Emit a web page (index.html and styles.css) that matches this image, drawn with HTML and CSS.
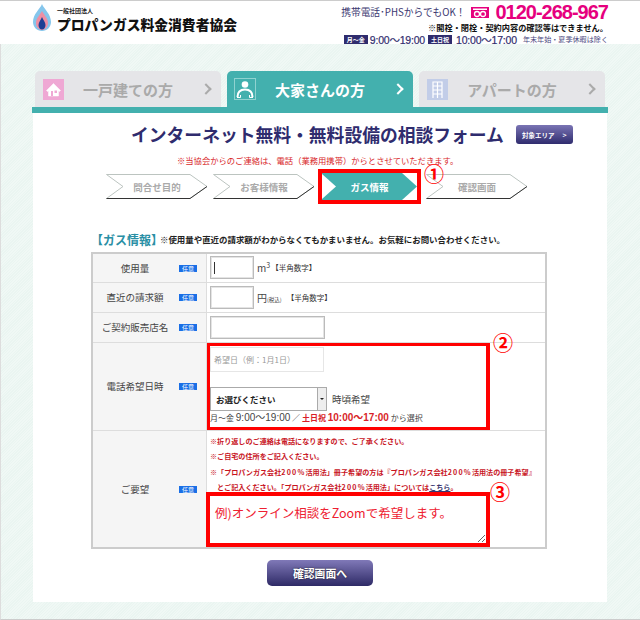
FILE: index.html
```html
<!DOCTYPE html>
<html lang="ja">
<head>
  <meta charset="UTF-8">
  <title>ガス情報 相談フォーム</title>
  <link rel="stylesheet" href="styles.css">
</head>
<body>
  <div class="header">
    <div class="logo">
      <svg class="flame" width="18" height="27" viewBox="0 0 18 27">
        <path d="M9 0C7 5 0 10 0 18c0 5 4 9 9 9s9-4 9-9C18 10 11 5 9 0z" fill="#85c6ec"/>
        <path d="M9 7C7 11 3 14 3 19c0 4 3 7 6 7s6-3 6-7C15 14 11 11 9 7z" fill="#ee8fa4"/>
        <path d="M9 13c-1 3-3.500 5-3.500 8 0 2.500 1.500 4.500 3.500 4.500s3.500-2 3.500-4.500c0-3-2.500-5-3.500-8z" fill="#1c3f94"/>
      </svg>
      <div class="logo-text">
        <div class="logo-small">一般社団法人</div>
        <div class="logo-name">プロパンガス料金消費者協会</div>
      </div>
    </div>
    <div class="contact">
      <div class="contact-top">
        <span class="contact-ok">携帯電話･PHSからでもOK！</span>
        <svg class="freedial" width="18" height="11" viewBox="0 0 18 11">
          <rect width="18" height="11" fill="#e6007e"/>
          <rect x="2" y="1.500" width="14" height="1.500" fill="#fff"/>
          <circle cx="6" cy="7" r="2.500" fill="none" stroke="#fff" stroke-width="1.300"/>
          <circle cx="12" cy="7" r="2.500" fill="none" stroke="#fff" stroke-width="1.300"/>
        </svg>
        <span class="phone">0120-268-967</span>
      </div>
      <div class="contact-note">※開栓・閉栓・契約内容の確認等はできません。</div>
      <div class="contact-hours">
        <span class="hours-badge">月〜金</span>
        <span class="hours">9:00〜19:00</span>
        <span class="hours-badge badge-sat">土日祝</span>
        <span class="hours">10:00〜17:00</span>
        <span class="hours-off">年末年始・夏季休暇は除く</span>
      </div>
    </div>
  </div>

  <div class="page">
    <div class="tabs">
      <div class="tab">
        <svg class="tab-icon" width="21" height="21" viewBox="0 0 21 21">
          <rect width="21" height="21" fill="#efa8d4"/>
          <path d="M10.500 4.500L3.500 11.500l1 1 1-.8V17h10v-5.300l1 .8 1-1z" fill="#fff" stroke="#fff" stroke-linejoin="round" stroke-width="0.500"/>
          <rect x="8" y="12" width="2" height="5" fill="#efa8d4"/>
          <rect x="11.500" y="11.500" width="2.500" height="2.500" fill="#efa8d4"/>
        </svg>
        <span class="tab-label">一戸建ての方</span>
        <span class="tab-arrow"></span>
      </div>
      <div class="tab tab-active">
        <svg class="tab-icon" width="22" height="22" viewBox="0 0 22 22">
          <rect x="0.500" y="0.500" width="21" height="21" fill="none" stroke="#8fd2d0"/>
          <circle cx="11" cy="6.500" r="3.300" fill="#fff"/>
          <path d="M3.500 19c0-5 3-7.500 7.500-7.500s7.500 2.500 7.500 7.500" fill="none" stroke="#fff" stroke-width="2"/>
          <path d="M6.500 17v2.500M15.500 17v2.500M3 19.500h3.500M15.500 19.500H19" fill="none" stroke="#fff" stroke-width="1"/>
        </svg>
        <span class="tab-label">大家さんの方</span>
        <span class="tab-arrow"></span>
      </div>
      <div class="tab">
        <svg class="tab-icon" width="21" height="21" viewBox="0 0 21 21">
          <rect width="21" height="21" fill="#c2cde8"/>
          <path d="M6 19V3h9v16M10.500 3v16M6 7h9M6 11h9M6 15h9" fill="none" stroke="#fff" stroke-width="1.200"/>
        </svg>
        <span class="tab-label">アパートの方</span>
        <span class="tab-arrow"></span>
      </div>
    </div>
    <div class="tab-line"></div>

    <div class="main">
      <div class="title-row">
        <h1>インターネット無料・無料設備の相談フォーム</h1>
        <a class="area-button">対象エリア<span class="area-arrow">&gt;</span></a>
      </div>
      <p class="contact-notice">※当協会からのご連絡は、電話（業務用携帯）からとさせていただきます。</p>

      <div class="steps">
        <div class="step">
          <svg width="102" height="25" viewBox="0 0 102 25">
            <polygon points="0.500,0.500 84,0.500 101,12.500 84,24.500 0.500,24.500 17,12.500" fill="#fff" stroke="#bcc4c0"/>
            <polyline points="101,12.500 84,24.500 0.500,24.500" fill="none" stroke="#333" stroke-width="1"/>
          </svg>
          <span>問合せ目的</span>
        </div>
        <div class="step">
          <svg width="102" height="25" viewBox="0 0 102 25">
            <polygon points="0.500,0.500 84,0.500 101,12.500 84,24.500 0.500,24.500 17,12.500" fill="#fff" stroke="#bcc4c0"/>
            <polyline points="101,12.500 84,24.500 0.500,24.500" fill="none" stroke="#333" stroke-width="1"/>
          </svg>
          <span>お客様情報</span>
        </div>
        <div class="step-mark">
          <div class="step step-active">
            <svg width="95" height="27" viewBox="0 0 95 27">
              <polygon points="0,0 80,0 95,13.500 80,27 0,27" fill="#43b0ae"/>
              <polygon points="0,1 14,13.500 0,26" fill="#fff"/>
            </svg>
            <span>ガス情報</span>
          </div>
        </div>
        <div class="step step-last">
          <svg width="102" height="25" viewBox="0 0 102 25">
            <polygon points="0.500,0.500 84,0.500 101,12.500 84,24.500 0.500,24.500 17,12.500" fill="#fff" stroke="#bcc4c0"/>
            <polyline points="101,12.500 84,24.500 0.500,24.500" fill="none" stroke="#333" stroke-width="1"/>
          </svg>
          <span>確認画面</span>
          <b class="num num-1">①</b>
        </div>
      </div>

      <div class="section-head">
        <span class="section-title">【ガス情報】</span>
        <span class="section-note">※使用量や直近の請求額がわからなくてもかまいません。お気軽にお問い合わせください。</span>
      </div>

      <table class="form-table">
        <tr class="row-first">
          <th><div class="th-inner"><span class="th-label">使用量</span><span class="opt">任意</span></div></th>
          <td>
            <div class="field">
              <div class="input input-small input-focus"></div>
              <span class="unit">m<sup>3</sup></span>
              <span class="hint hint-near">【半角数字】</span>
            </div>
          </td>
        </tr>
        <tr class="row-short">
          <th><div class="th-inner"><span class="th-label">直近の請求額</span><span class="opt">任意</span></div></th>
          <td>
            <div class="field">
              <div class="input input-small"></div>
              <span class="unit">円<small>(税込)</small></span>
              <span class="hint">【半角数字】</span>
            </div>
          </td>
        </tr>
        <tr class="row-short">
          <th><div class="th-inner"><span class="th-label">ご契約販売店名</span><span class="opt">任意</span></div></th>
          <td>
            <div class="field"><div class="input input-wide"></div></div>
          </td>
        </tr>
        <tr class="row-date">
          <th><div class="th-inner"><span class="th-label">電話希望日時</span><span class="opt">任意</span></div></th>
          <td class="cell-mark">
            <div class="date-mark">
              <div class="date-input">希望日（例：1月1日）</div>
              <div class="time-row">
                <div class="fake-select">
                  <span class="select-text">お選びください</span>
                  <span class="select-btn"></span>
                </div>
                <span class="time-label">時頃希望</span>
              </div>
              <div class="time-note">月〜金 <span class="time-num">9:00〜19:00</span> ／ <b>土日祝 <span class="time-num">10:00〜17:00</span></b> から選択</div>
              <b class="num num-2">②</b>
            </div>
          </td>
        </tr>
        <tr class="row-request">
          <th><div class="th-inner"><span class="th-label">ご要望</span><span class="opt">任意</span></div></th>
          <td class="cell-mark">
            <div class="request">
              <p>※折り返しのご連絡は電話になりますので、ご了承ください。</p>
              <p>※ご自宅の住所をご記入ください。</p>
              <p>※「プロパンガス会社<span class="pct">200%</span>活用法」冊子希望の方は『プロパンガス会社<span class="pct">200%</span>活用法の冊子希望』</p>
              <p class="indent">とご記入ください。「プロパンガス会社<span class="pct">200%</span>活用法」については<a>こちら</a>。</p>
              <div class="request-wrap">
                <textarea class="request-box">例)オンライン相談をZoomで希望します。</textarea>
                <b class="num num-3">③</b>
              </div>
            </div>
          </td>
        </tr>
      </table>

      <div class="submit-row"><a class="submit">確認画面へ</a></div>
    </div>
  </div>
</body>
</html>
```

FILE: styles.css
```css
html, body {
  margin: 0;
  height: 620px;
  overflow: hidden;
}
body {
  font-family: "Noto Sans CJK JP", "Liberation Sans", sans-serif;
  background-color: #fff;
  border-top: 1px solid #ccc;
  box-sizing: border-box;
  color: #444;
}
.header {
  display: flex;
  justify-content: space-between;
  height: 43px;
  padding: 0 32px 0 33px;
  background-color: #fff;
}
.logo {
  display: flex;
  gap: 6px;
  padding-top: 3px;
}
.logo-small {
  font-size: 6px;
  font-weight: 700;
  line-height: 8px;
  margin-top: 3px;
  color: #222;
}
.logo-name {
  font-size: 13.8px;
  font-weight: 900;
  line-height: 18px;
  color: #111;
}
.contact {
  display: flex;
  flex-direction: column;
  align-items: flex-end;
  width: 267px;
}
.contact-top {
  display: flex;
  align-items: center;
  height: 18px;
  margin-top: 2px;
  white-space: nowrap;
}
.contact-ok {
  font-size: 9.700px;
  line-height: 18px;
  color: #3b3870;
}
.freedial {
  margin: 0 6px 0 6px;
}
.phone {
  font-family: "Liberation Sans", sans-serif;
  font-size: 20px;
  font-weight: 700;
  letter-spacing: -1px;
  color: #e6007e;
}
.contact-note {
  font-size: 8.2px;
  font-weight: 700;
  line-height: 10px;
  color: #111;
  margin-top: 1px;
}
.contact-hours {
  display: flex;
  align-items: center;
  height: 12px;
  margin-top: 1px;
  white-space: nowrap;
}
.hours-badge {
  background-color: #2f2c6e;
  color: #fff;
  font-size: 6px;
  font-weight: 700;
  line-height: 9px;
  padding: 0 3px;
  margin-right: 2px;
}
.badge-sat {
  margin: 0 4px 0 3px;
}
.hours {
  font-family: "Liberation Sans", "Noto Sans CJK JP", sans-serif;
  font-size: 10.500px;
  letter-spacing: -0.2px;
  color: #2f2c6e;
  -webkit-text-stroke: 0.2px #2f2c6e;
}
.hours-off {
  font-size: 7.100px;
  color: #4a4880;
  margin-left: 6px;
}
.page {
  height: 576px;
  border-bottom: 1px solid #ccc;
  border-left: 1px solid #ddd;
  background-color: #eef7f4;
  background-image: repeating-linear-gradient(135deg, #f0f8f5 0, #f0f8f5 1px, #eaf5f1 1px, #eaf5f1 2px);
  padding-top: 27px;
  box-sizing: border-box;
}
.tabs {
  display: flex;
  gap: 6px;
  padding-left: 34px;
}
.tab {
  display: flex;
  align-items: center;
  width: 186px;
  height: 36px;
  padding: 0 8px;
  box-sizing: border-box;
  background-color: #e5e5e8;
  border-radius: 5px 5px 0 0;
  color: #aaa;
}
.tab-active {
  background-color: #43b0ae;
  color: #fff;
}
.tab-active .tab-icon {
  margin-left: -1px;
}
.tab-icon {
  flex-shrink: 0;
}
.tab-label {
  flex: 1;
  text-align: center;
  font-size: 15px;
  font-weight: 700;
  padding-right: 10px;
}
.tab-arrow {
  width: 6px;
  height: 6px;
  margin-right: 3px;
  border-top: 2px solid currentColor;
  border-right: 2px solid currentColor;
  transform: rotate(45deg);
}
.tab-line {
  height: 6px;
  width: 576px;
  margin-left: 31px;
  background-color: #43b0ae;
}
.main {
  width: 574px;
  height: 489px;
  margin-left: 32px;
  background-color: #fff;
  box-sizing: border-box;
  padding-top: 12px;
}
.title-row {
  display: flex;
  align-items: center;
  gap: 12px;
  height: 19px;
  padding-left: 98px;
}
.title-row h1 {
  margin: 0;
  font-size: 17.800px;
  font-weight: 700;
  line-height: 19px;
  color: #2f2c6e;
  white-space: nowrap;
}
.area-button {
  display: flex;
  align-items: center;
  justify-content: center;
  gap: 8px;
  width: 57px;
  height: 19px;
  border-radius: 3px;
  background: linear-gradient(#7a74b4, #2f2c6e);
  color: #fff;
  font-size: 6.500px;
  font-weight: 700;
}
.area-arrow {
  font-size: 7px;
}
.contact-notice {
  margin: 10px 0 0 144px;
  font-size: 8.300px;
  line-height: 12px;
  color: #d81e28;
  white-space: nowrap;
}
.steps {
  display: flex;
  align-items: center;
  gap: 5px;
  height: 35px;
  margin-top: 3px;
  padding-left: 73px;
}
.step {
  position: relative;
  width: 102px;
  height: 25px;
  display: flex;
  align-items: center;
  justify-content: center;
  flex-shrink: 0;
}
.step svg {
  position: absolute;
  top: 0;
  left: 0;
}
.step span {
  position: relative;
  font-size: 9.500px;
  font-weight: 700;
  color: #aaa;
}
.step-mark {
  width: 103px;
  height: 35px;
  margin-left: -2px;
  border: 4px solid #f00;
  box-sizing: border-box;
  flex-shrink: 0;
}
.step-active {
  width: 95px;
  height: 27px;
}
.step-active span {
  color: #fff;
}
.num {
  position: absolute;
  font-size: 20px;
  line-height: 20px;
  font-weight: 700;
  color: #f00;
}
.num-1 {
  top: -10px;
  left: -2px;
}
.num-2 {
  top: -13px;
  left: 283px;
}
.num-3 {
  top: -10px;
  left: 284px;
}
.section-head {
  display: flex;
  align-items: center;
  height: 14px;
  margin: 28px 0 0 58px;
  white-space: nowrap;
}
.section-title {
  width: 69px;
  font-size: 12px;
  font-weight: 700;
  color: #2a8fa5;
}
.section-note {
  font-size: 8.450px;
  font-weight: 700;
  color: #222;
}
.form-table {
  width: 456px;
  margin: 6px 0 0 58px;
  border-collapse: collapse;
  border: 2px solid #ccc;
  table-layout: fixed;
}
.form-table th,
.form-table td {
  border: 1px solid #ddd;
  padding: 0;
}
.form-table th {
  width: 113px;
  background-color: #f5f5f5;
  font-weight: 400;
}
.th-inner {
  position: relative;
  display: flex;
  align-items: center;
  justify-content: center;
  padding-right: 29px;
}
.th-label {
  font-size: 9.500px;
  color: #444;
  white-space: nowrap;
}
.opt {
  position: absolute;
  top: 50%;
  right: 9px;
  width: 18px;
  height: 7px;
  margin-top: -3px;
  background-color: #1a6fe6;
  color: #fff;
  font-size: 6px;
  line-height: 7px;
  text-align: center;
}
.row-first {
  height: 29px;
}
.row-short {
  height: 30px;
}
.row-date {
  height: 87px;
}
.row-request {
  height: 117px;
}
.field {
  display: flex;
  align-items: center;
  padding-left: 3px;
  white-space: nowrap;
}
.input {
  height: 23px;
  box-sizing: border-box;
  border: 1px solid #bbb;
  box-shadow: inset 0 0 0 1px #e4e4e4;
  background-color: #fff;
}
.input-small {
  width: 44px;
}
.input-wide {
  width: 115px;
}
.input-focus {
  position: relative;
}
.input-focus::after {
  content: "";
  position: absolute;
  left: 3px;
  top: 5px;
  width: 1px;
  height: 12px;
  background-color: #333;
}
.unit {
  margin-left: 3px;
  font-size: 10px;
  color: #444;
}
.unit sup {
  font-size: 7px;
  line-height: 0;
}
.unit small {
  font-size: 5.500px;
}
.hint {
  margin-left: 5px;
  font-size: 7.500px;
  color: #333;
}
.hint-near {
  margin-left: 1px;
}
.cell-mark {
  vertical-align: top;
}
.date-mark {
  position: relative;
  height: 87px;
  box-sizing: border-box;
  width: 283px;
  border-style: solid;
  border-color: #f00;
  border-width: 3px 4px 3px 3px;
}
.date-input {
  width: 114px;
  height: 25px;
  margin-top: 1px;
  box-sizing: border-box;
  border: 1px solid #e6e6e6;
  padding-left: 3px;
  font-size: 8px;
  line-height: 23px;
  color: #999;
}
.time-row {
  display: flex;
  align-items: center;
  gap: 5px;
  margin-top: 15px;
}
.fake-select {
  display: flex;
  width: 117px;
  height: 24px;
  box-sizing: border-box;
  border: 1px solid #aaa;
  background-color: #fff;
}
.select-text {
  flex: 1;
  padding-left: 5px;
  font-size: 8.500px;
  font-weight: 700;
  line-height: 22px;
  color: #222;
}
.select-btn {
  position: relative;
  width: 8px;
  background-color: #eee;
  border-left: 1px solid #aaa;
}
.select-btn::after {
  content: "";
  position: absolute;
  top: 10px;
  left: 2px;
  border: 2px solid transparent;
  border-top: 2px solid #222;
}
.time-label {
  font-size: 9.500px;
  color: #444;
}
.time-note {
  margin-top: 1px;
  font-size: 8px;
  line-height: 12px;
  color: #444;
  white-space: nowrap;
}
.time-num {
  font-family: "Liberation Sans", "Noto Sans CJK JP", sans-serif;
  font-size: 10px;
}
.time-note b {
  color: #d81e28;
}
.request {
  height: 116px;
  padding-top: 3px;
  box-sizing: border-box;
}
.request p {
  margin: 0 0 0 3px;
  font-size: 7.100px;
  font-weight: 700;
  line-height: 15.500px;
  color: #c8141e;
  white-space: nowrap;
}
.request .indent {
  padding-left: 7px;
}
.pct {
  letter-spacing: 1.200px;
}
.request a {
  color: #3b3870;
  text-decoration: underline;
}
.request-wrap {
  position: relative;
  width: 284px;
  margin: -4px 0 0 -1px;
}
.request-box {
  display: block;
  width: 284px;
  height: 55px;
  margin: 0;
  box-sizing: border-box;
  border: 4px solid #f00;
  outline: none;
  padding: 6px 5px 0;
  font-family: "Noto Sans CJK JP", sans-serif;
  font-size: 12.500px;
  line-height: 22px;
  color: #ee2030;
  background-color: #fff;
}
.submit-row {
  display: flex;
  justify-content: center;
  margin-top: 11px;
}
.submit {
  display: block;
  width: 106px;
  height: 26px;
  border-radius: 5px;
  background: linear-gradient(#8079b8, #2e2a66);
  color: #fff;
  font-size: 10.800px;
  font-weight: 700;
  line-height: 26px;
  text-align: center;
  text-shadow: 0 0 2px #222;
}
```
